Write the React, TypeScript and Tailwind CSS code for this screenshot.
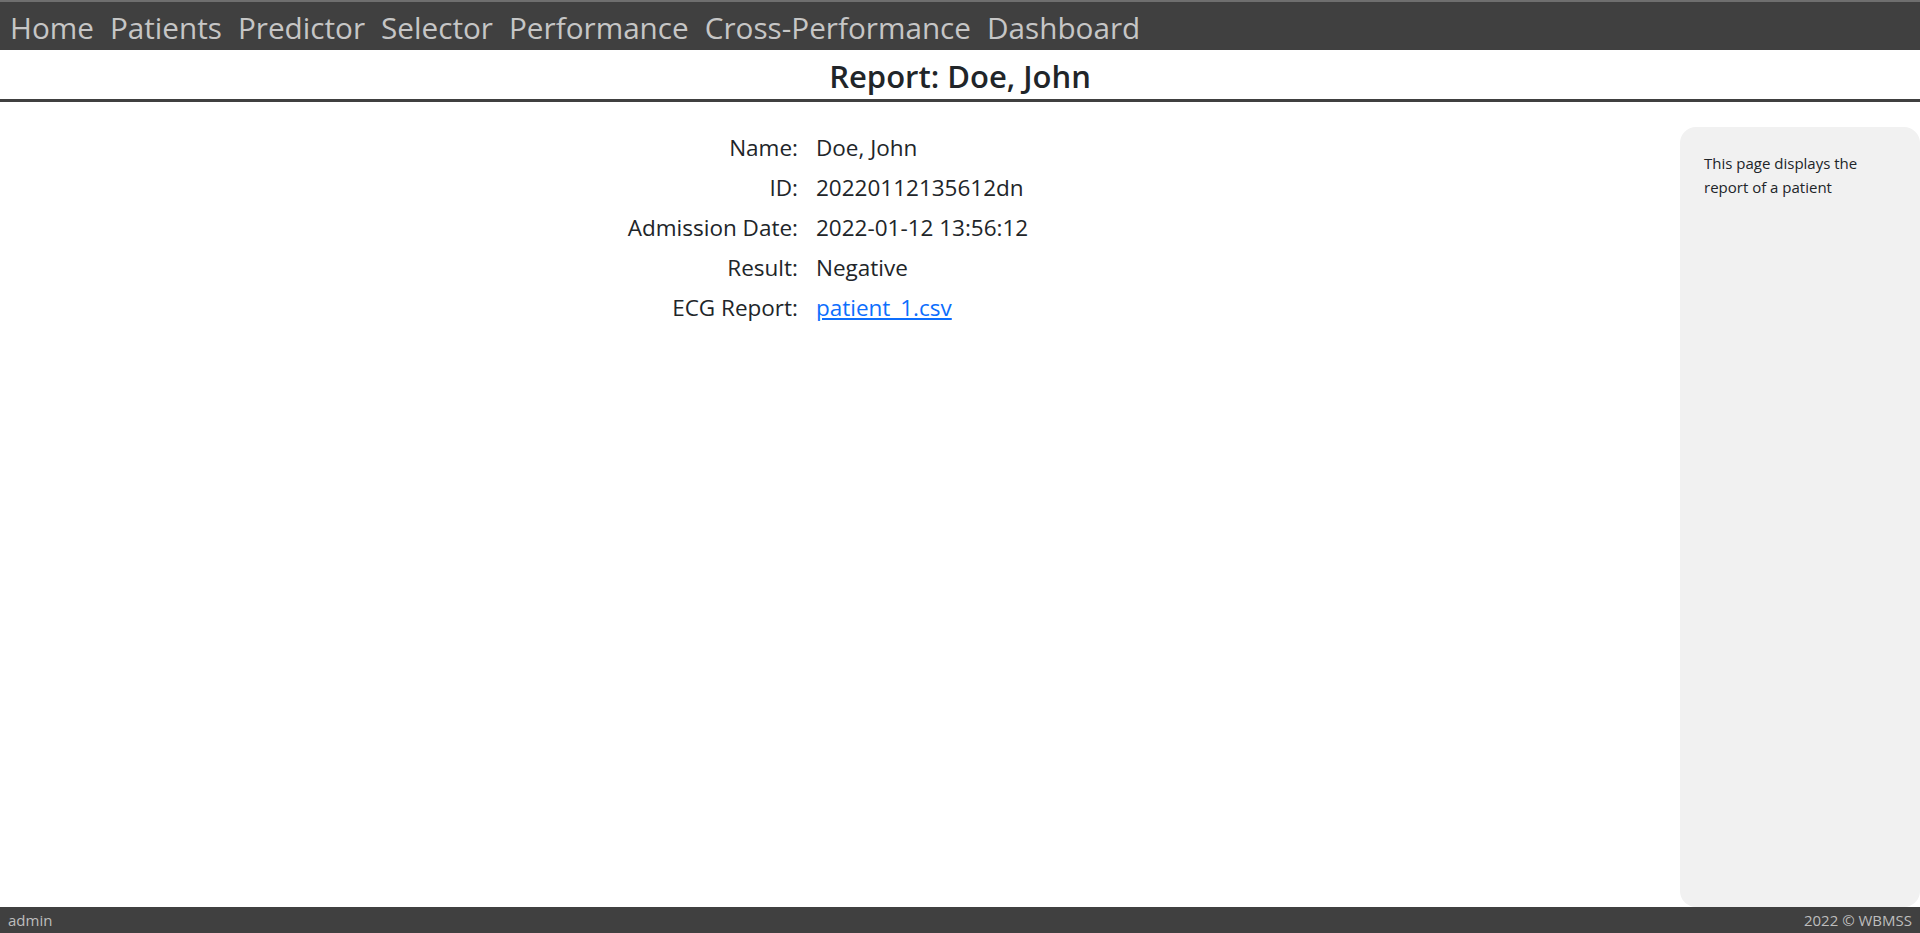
const navLinks = ['Home', 'Patients', 'Predictor', 'Selector', 'Performance', 'Cross-Performance', 'Dashboard']

const rows: { label: string; value: string; href?: string }[] = [
  { label: 'Name:', value: 'Doe, John' },
  { label: 'ID:', value: '20220112135612dn' },
  { label: 'Admission Date:', value: '2022-01-12 13:56:12' },
  { label: 'Result:', value: 'Negative' },
  { label: 'ECG Report:', value: 'patient_1.csv', href: '#' },
]

export default function App() {
  return (
    <div className="h-screen flex flex-col bg-white text-[#212529] font-['Open_Sans','Noto_Sans',sans-serif]">
      <nav className="h-[50px] shrink-0 bg-[#404040] border-t-2 border-[#6f6f6f] flex items-center px-[2px]">
        {navLinks.map((l) => (
          <a key={l} href="#" className="px-[8px] text-[29.7px] leading-none text-[#c6c6c6] pt-[3px]">
            {l}
          </a>
        ))}
      </nav>

      <header className="h-[52px] shrink-0 border-b-[3px] border-[#404040] flex items-center justify-center pt-[4px]">
        <h2 className="text-[31px] font-semibold leading-none">Report: Doe, John</h2>
      </header>

      <main className="flex-1 flex min-h-0">
        <section className="flex-1 pt-[26px]">
          <div className="mx-auto w-fit grid grid-cols-[auto_auto] gap-x-[18px] text-[22.5px]">
            {rows.map((r) => (
              <div key={r.label} className="contents">
                <div className="h-10 flex items-center justify-end">{r.label}</div>
                <div className="h-10 flex items-center">
                  {r.href ? (
                    <a href={r.href} className="text-[#0d6efd] underline">
                      {r.value}
                    </a>
                  ) : (
                    r.value
                  )}
                </div>
              </div>
            ))}
          </div>
        </section>

        <aside className="w-[240px] ml-6 mt-[25px] rounded-2xl bg-[#f1f1f1] p-6 text-[15px] leading-6 text-[#212529]">
          This page displays the report of a patient
        </aside>
      </main>

      <footer className="h-[26px] shrink-0 bg-[#404040] flex items-center justify-between px-2 text-[15px] text-[#bdbdbd]">
        <span>admin</span>
        <span>2022 © WBMSS</span>
      </footer>
    </div>
  )
}
